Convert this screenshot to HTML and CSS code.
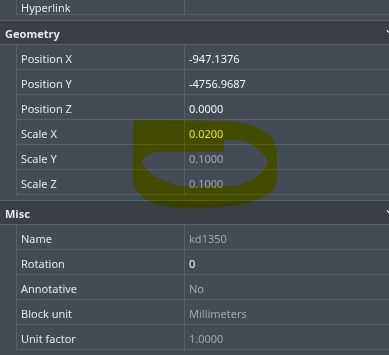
FILE: index.html
```html
<!DOCTYPE html>
<html lang="en">
<head>
    <meta charset="UTF-8">
    <meta name="viewport" content="width=device-width, initial-scale=1.0">
    <title>properties</title>
    <link rel="stylesheet" href="styles.css">
</head>
<body>
    <div class="palette">
        <div class="rows rows-top">
            <div class="row"><span class="prop">Hyperlink</span><span class="val"></span></div>
        </div>

        <div class="group-head">
            <span>Geometry</span>
            <svg class="chev" width="8" height="6" viewBox="0 0 8 6"><path d="M1 1.5 L4 4.5 L7 1.5" fill="none" stroke="#fff" stroke-width="1.2"/></svg>
        </div>
        <div class="rows">
            <div class="row"><span class="prop">Position X</span><span class="val">-947.1376</span></div>
            <div class="row"><span class="prop">Position Y</span><span class="val">-4756.9687</span></div>
            <div class="row"><span class="prop">Position Z</span><span class="val">0.0000</span></div>
            <div class="row"><span class="prop">Scale X</span><span class="val hot">0.0200</span></div>
            <div class="row"><span class="prop">Scale Y</span><span class="val dim">0.1000</span></div>
            <div class="row"><span class="prop">Scale Z</span><span class="val dim">0.1000</span></div>
        </div>

        <div class="group-head">
            <span>Misc</span>
            <svg class="chev" width="8" height="6" viewBox="0 0 8 6"><path d="M1 1.5 L4 4.5 L7 1.5" fill="none" stroke="#fff" stroke-width="1.2"/></svg>
        </div>
        <div class="rows">
            <div class="row"><span class="prop">Name</span><span class="val dim">kd1350</span></div>
            <div class="row"><span class="prop">Rotation</span><span class="val">0</span></div>
            <div class="row"><span class="prop">Annotative</span><span class="val dim">No</span></div>
            <div class="row"><span class="prop">Block unit</span><span class="val dim">Millimeters</span></div>
            <div class="row"><span class="prop">Unit factor</span><span class="val dim">1.0000</span></div>
        </div>
    </div>

    <!-- marker scribble drawn over the panel -->
    <svg class="scribble" width="389" height="355" viewBox="0 0 389 355">
        <path fill-rule="evenodd" fill="#ffff00"
              d="M135 120 L228 121 C252 123 268 130 274 142 L277 150 L277 182 C275 192 266 197 250 202 C232 207 205 209 180 208 C160 206 147 202 141 195 C135 190 133 185 133 178 L133 135 C133 126 133 121 135 120 Z
                 M142 162 C146 156 150 153 158 152 L224 152 L224 140 L240 140 C254 143 263 151 268 163 C262 175 252 183 232 186 L195 187 C172 186 150 178 142 162 Z"/>
    </svg>
</body>
</html>
```

FILE: styles.css
```css
:root {
    --panel-bg: #434b57;
    --head-bg: #393e47;
    --line: #56606c;
    --text: #e2e8ee;
    --value: #f2f5f8;
    --value-dim: #9ba6b3;
    --value-hot: #e8e800;
}

body {
    margin: 0;
    background: var(--panel-bg);
    font-family: 'Noto Sans', sans-serif;
    font-size: 11px;
    color: var(--text);
    overflow: hidden;
    height: 355px;
    position: relative;
}

.rows {
    margin-left: 16px;
    border-left: 1px solid var(--line);
    margin-bottom: 5px;
}

.row {
    display: grid;
    grid-template-columns: 168px 1fr;
    height: 24px;
    border-bottom: 1px solid var(--line);
}

.row span {
    line-height: 24px;
    padding-top: 2px;
    white-space: nowrap;
}

/* only the tail of the row above is visible */
.rows-top .row {
    height: 14px;
}

.rows-top .row span {
    line-height: 13px;
    padding-top: 1px;
}

.prop {
    padding-left: 4px;
    border-right: 1px solid var(--line);
}

.val {
    padding-left: 4px;
    color: var(--value);
}

.val.dim {
    color: var(--value-dim);
}

.val.hot {
    color: var(--value-hot);
}

.group-head {
    position: relative;
    height: 23px;
    background: var(--head-bg);
    border-top: 1px solid var(--line);
    border-bottom: 1px solid var(--line);
    font-weight: bold;
    line-height: 23px;
    padding-left: 5px;
}

.group-head span {
    display: block;
    padding-top: 1px;
}

.chev {
    position: absolute;
    right: -5px;
    top: 8px;
}

.scribble {
    position: absolute;
    left: 0;
    top: 0;
    pointer-events: none;
    mix-blend-mode: multiply;
}
```
